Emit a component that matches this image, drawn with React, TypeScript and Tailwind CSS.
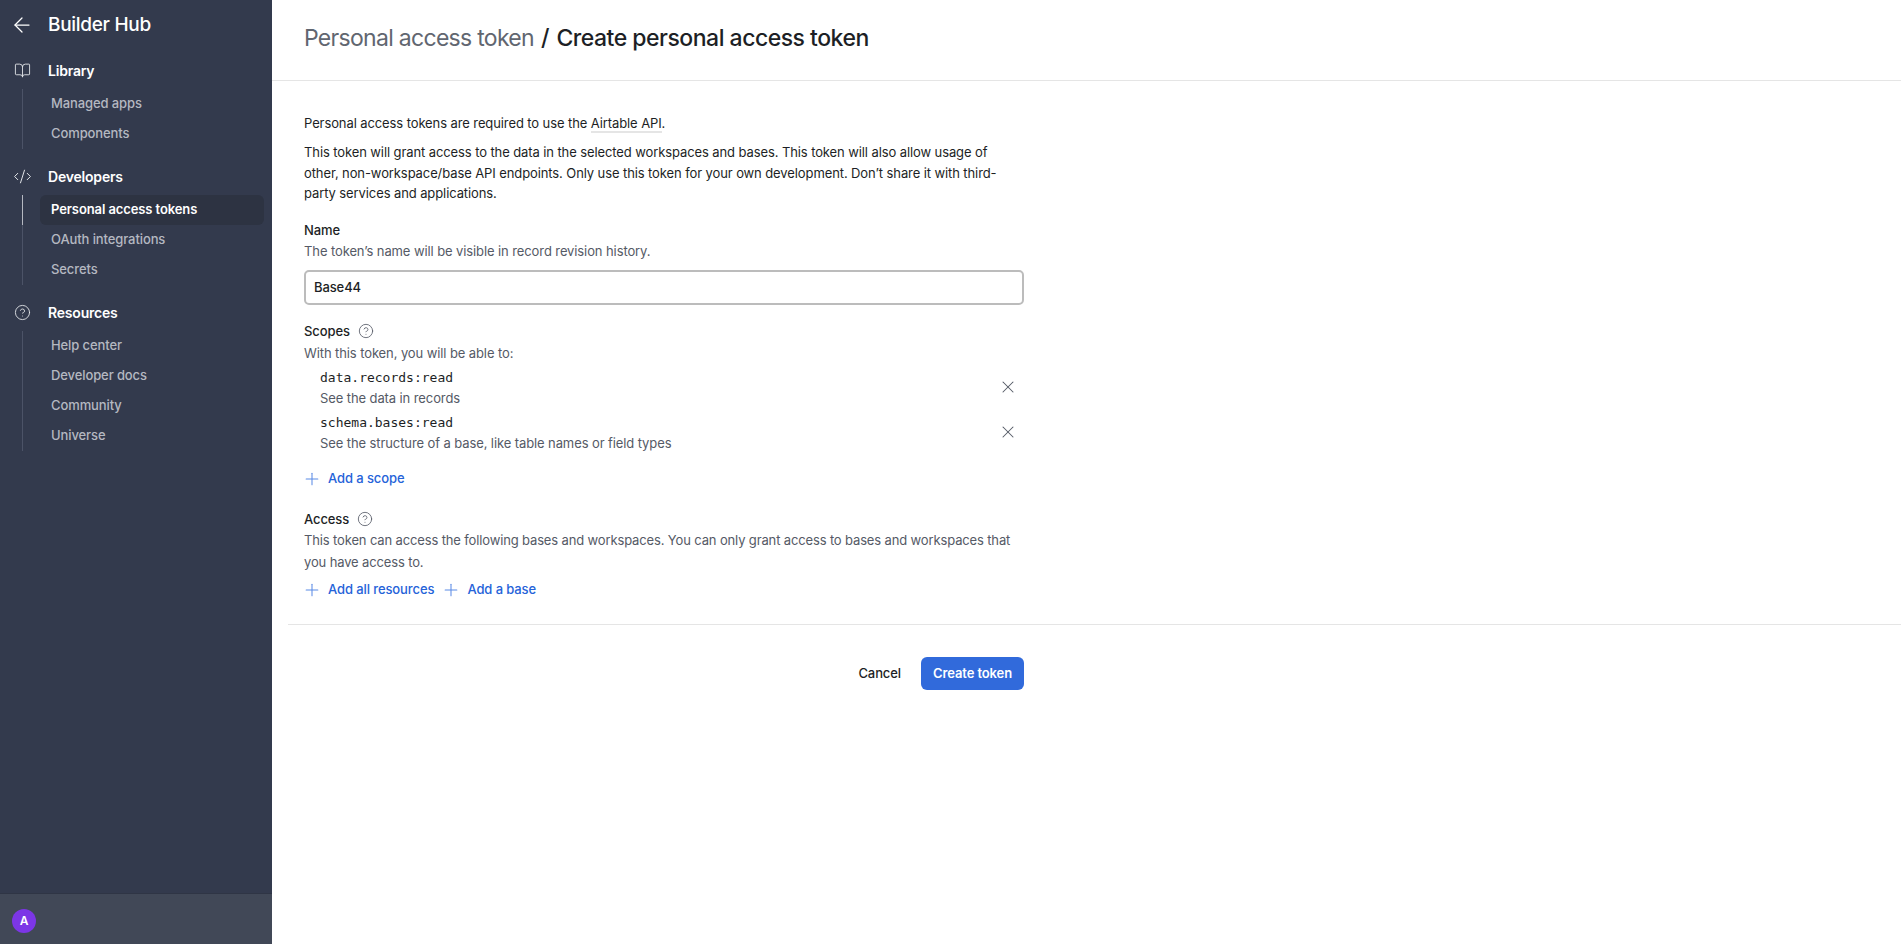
import { ArrowLeft, BookOpen, CircleHelp, CodeXml, Plus, X } from "lucide-react";
import React from "react";

type NavGroup = {
  label: string;
  icon: React.ReactNode;
  items: string[];
  active?: string;
};

const groups: NavGroup[] = [
  {
    label: "Library",
    icon: <BookOpen className="w-[17px] h-[17px]" strokeWidth={1.25} />,
    items: ["Managed apps", "Components"],
  },
  {
    label: "Developers",
    icon: <CodeXml className="w-[19px] h-[19px] -ml-[1px]" strokeWidth={1.25} />,
    items: ["Personal access tokens", "OAuth integrations", "Secrets"],
    active: "Personal access tokens",
  },
  {
    label: "Resources",
    icon: <CircleHelp className="w-[17px] h-[17px]" strokeWidth={1.25} />,
    items: ["Help center", "Developer docs", "Community", "Universe"],
  },
];

function Sidebar() {
  return (
    <aside className="w-[272px] h-[944px] shrink-0 bg-[#333a4d] flex flex-col text-white">
      <div className="flex-1">
        <div className="flex items-center h-[50px] pl-[10px]">
          <ArrowLeft className="w-6 h-6 mr-[14px]" strokeWidth={1.25} />
          <span className="text-[19px] leading-[24px] font-medium tracking-[-0.3px]">Builder Hub</span>
        </div>
        {groups.map((g) => (
          <div key={g.label} className="mt-[8px] mb-[15px]">
            <div className="flex items-center h-[24px] pl-[14px]">
              <span className="w-[34px] text-[#e5e7eb]">{g.icon}</span>
              <span className="text-[14px] font-semibold tracking-[-0.2px]">{g.label}</span>
            </div>
            <div className="mt-[7px] ml-[22px] border-l border-[#4c5367] flex flex-col pl-[17px] pr-[8px]">
              {g.items.map((item) => (
                <div
                  key={item}
                  className={
                    item === g.active
                      ? "relative h-[30px] flex items-center pl-[11px] rounded-[6px] bg-[#2d3342] text-[13px] font-semibold text-white tracking-[-0.1px]"
                      : "h-[30px] flex items-center pl-[11px] text-[13px] font-medium text-[#b5b8c1] tracking-[-0.1px]"
                  }
                >
                  {item === g.active && (
                    <span className="absolute left-[-18px] top-0 h-[30px] w-px bg-[#b5b8c1]" />
                  )}
                  {item}
                </div>
              ))}
            </div>
          </div>
        ))}
      </div>
      <div className="h-[51px] bg-[#414857] border-t border-[#2f3545] flex items-start pt-[15px] pl-[12px]">
        <div className="w-6 h-6 rounded-full bg-[#7c36e6] flex items-center justify-center text-[12px] font-semibold">
          A
        </div>
      </div>
    </aside>
  );
}

function AddLink({ label }: { label: string }) {
  return (
    <span className="flex items-center text-[13px] font-medium text-[#2563d9]">
      <Plus className="w-5 h-5 -ml-[2px] mr-[6px] text-[#5b8be6]" strokeWidth={1.25} />
      {label}
    </span>
  );
}

function Scope({ name, desc }: { name: string; desc: string }) {
  return (
    <div className="flex items-center justify-between h-[45px] pl-[16px] pr-[6px]">
      <div>
        <div className="font-['DejaVu_Sans_Mono',monospace] text-[13px] leading-[20px] tracking-normal text-[#1d1f25]">{name}</div>
        <div className="text-[13px] leading-[20px] text-[#555a66]">{desc}</div>
      </div>
      <X className="w-5 h-5 -mt-[2px] text-[#555a66]" strokeWidth={1.25} />
    </div>
  );
}

export default function App() {
  return (
    <div className="flex h-[944px] overflow-hidden bg-white font-['Inter',sans-serif] text-[#1d1f25]">
      <Sidebar />
      <main className="flex-1">
        <header className="h-[81px] border-b border-[#e5e5e5] pl-[32px] flex items-center pb-[3px] text-[23px] font-medium">
          <span className="font-normal text-[#616670] tracking-[-0.7px]">Personal access token</span>
          <span className="mx-[7px]">/</span>
          <span className="tracking-[-0.5px]">Create personal access token</span>
        </header>

        <div className="pl-[16px] pt-[32px]">
          <div className="w-[736px] pl-[16px] tracking-[-0.1px]">
            <p className="text-[13px] leading-[20px]">
              Personal access tokens are required to use the{" "}
              <span className="border-b-2 border-[#e5e5e5]">Airtable API</span>.
            </p>
            <p className="mt-[9px] text-[13px] leading-[20.5px]">
              This token will grant access to the data in the selected workspaces and bases. This token will also allow usage of
              other, non-workspace/base API endpoints. Only use this token for your own development. Don’t share it with third-party
              services and applications.
            </p>

            <div className="mt-[16px] text-[13px] leading-[20px] font-medium">Name</div>
            <div className="text-[13px] leading-[20px] mt-[1px] text-[#555a66]">The token’s name will be visible in record revision history.</div>
            <div className="mt-[9px] h-[35px] border-2 border-[#bcbcbc] rounded-[5px] flex items-center pl-[8px] pt-[2px] text-[13px] font-medium">
              Base44
            </div>

            <div className="mt-[16px] flex items-center text-[13px] leading-[20px] font-medium">
              Scopes
              <CircleHelp className="ml-[8px] w-4 h-4 text-[#555a66]" strokeWidth={1.25} />
            </div>
            <div className="mt-[2px] mb-[3px] text-[13px] leading-[20px] text-[#555a66]">With this token, you will be able to:</div>
            <Scope name="data.records:read" desc="See the data in records" />
            <Scope name="schema.bases:read" desc="See the structure of a base, like table names or field types" />
            <div className="mt-[13px]">
              <AddLink label="Add a scope" />
            </div>

            <div className="mt-[20px] flex items-center text-[13px] leading-[20px] font-medium">
              Access
              <CircleHelp className="ml-[8px] w-4 h-4 text-[#555a66]" strokeWidth={1.25} />
            </div>
            <p className="text-[13px] leading-[22px] tracking-[-0.14px] text-[#555a66]">
              This token can access the following bases and workspaces. You can only grant access to bases and workspaces that you
              have access to.
            </p>
            <div className="mt-[7px] flex items-center gap-[9px]">
              <AddLink label="Add all resources" />
              <AddLink label="Add a base" />
            </div>
          </div>

          <div className="mt-[24px] border-t border-[#e5e5e5] pt-[32px]">
            <div className="w-[736px] flex justify-end items-center">
              <span className="text-[13px] font-medium mr-[20px] pt-px tracking-[-0.1px]">Cancel</span>
              <button className="h-[33px] w-[103px] rounded-[6px] bg-[#316adb] pt-px text-white text-[13px] font-semibold tracking-[-0.1px]">
                Create token
              </button>
            </div>
          </div>
        </div>
      </main>
    </div>
  );
}
